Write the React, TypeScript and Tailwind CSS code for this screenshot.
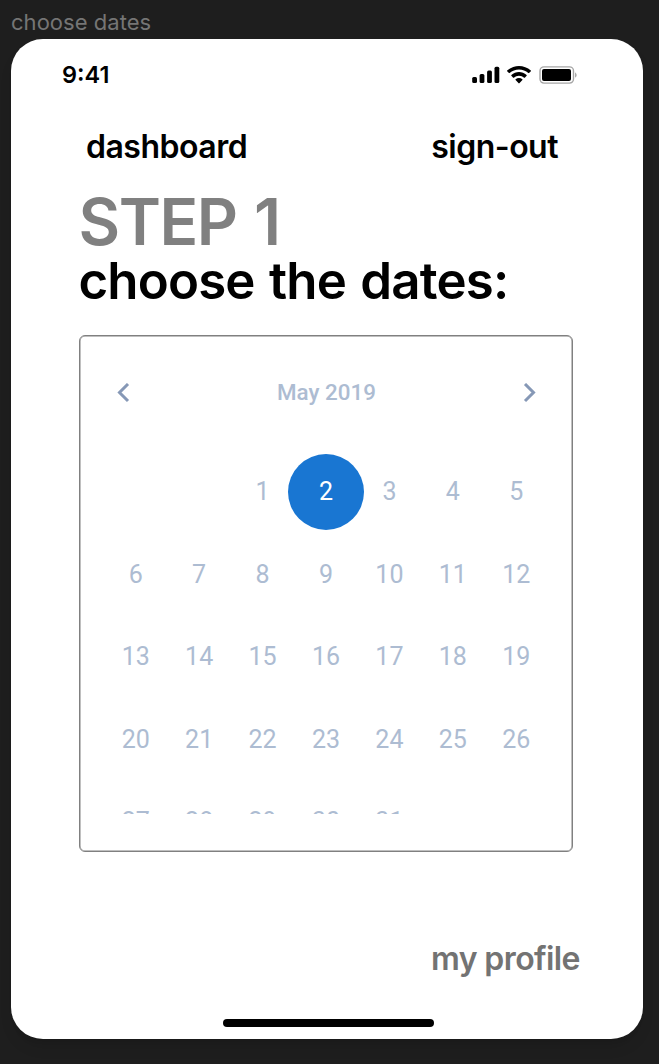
const days = Array.from({ length: 31 }, (_, i) => i + 1);

function Chevron({ d }: { d: string }) {
  return (
    <svg className="block h-[20px] w-[14px]" viewBox="0 0 14 20" fill="none" stroke="#8698b6" strokeWidth="3">
      <path d={d} />
    </svg>
  );
}

function StatusIcons() {
  return (
    <svg className="h-[20px] w-[106px]" viewBox="0 0 106 20">
      <rect x="0.200" y="12" width="4.800" height="6" rx="1.500" />
      <rect x="7.600" y="9" width="4.800" height="9" rx="1.500" />
      <rect x="15.100" y="5.500" width="4.800" height="12.500" rx="1.500" />
      <rect x="22.500" y="1.700" width="4.800" height="16.300" rx="1.500" />
      <path
        transform="translate(35 1) scale(1.4)"
        d="M8.57 2.466C11.058 2.466 13.45 3.388 15.253 5.042C15.389 5.17 15.606 5.168 15.74 5.038L17.037 3.729C17.105 3.663 17.143 3.574 17.142 3.48C17.142 3.387 17.103 3.298 17.034 3.233C12.303 -1.078 4.839 -1.078 .108 3.233C.039 3.298 0 3.387 0 3.48C0 3.574 .037 3.663 .105 3.729L1.402 5.038C1.536 5.169 1.753 5.17 1.89 5.042C3.692 3.388 6.084 2.466 8.571 2.466ZM8.568 6.889C9.925 6.889 11.234 7.401 12.24 8.327C12.376 8.458 12.591 8.456 12.723 8.321L14.01 6.991C14.078 6.921 14.116 6.827 14.115 6.728C14.114 6.63 14.074 6.536 14.005 6.468C10.942 3.577 6.197 3.577 3.134 6.468C3.065 6.536 3.025 6.63 3.024 6.728C3.023 6.827 3.061 6.921 3.13 6.991L4.416 8.321C4.549 8.456 4.764 8.458 4.9 8.327C5.905 7.402 7.212 6.889 8.568 6.889ZM11.092 9.802C11.094 9.908 11.056 10.009 10.986 10.083L8.81 12.36C8.746 12.426 8.66 12.464 8.568 12.464C8.477 12.464 8.391 12.426 8.327 12.36L6.151 10.083C6.081 10.009 6.043 9.908 6.045 9.802C6.047 9.697 6.09 9.598 6.162 9.527C7.551 8.25 9.586 8.25 10.975 9.527C11.048 9.598 11.09 9.697 11.092 9.802Z"
      />
      <rect x="68" y="1.900" width="33.500" height="16.200" rx="4" fill="none" stroke="#a6a6a6" strokeWidth="1.400" />
      <rect x="70" y="4.100" width="29" height="11.800" rx="2" />
      <path d="M103.200 7.200 Q106 10 103.200 12.800Z" fill="#999" />
    </svg>
  );
}

export default function App() {
  return (
    <div className="flex h-[1064px] w-[659px] flex-col overflow-hidden bg-[#1e1e1e] pl-[11px] font-['Inter',sans-serif] text-black">
      <div className="h-[39px] pt-[6px] text-[22px] leading-[33px] tracking-[0.03px] text-[#757575]">choose dates</div>
      <main className="flex h-[1000px] w-[632px] flex-col rounded-[32px] bg-white shadow-lg">
        <div className="flex h-[72px] items-center justify-between pr-[65px] pl-[51px]">
          <span className="text-[23.500px] font-semibold">9:41</span>
          <StatusIcons />
        </div>
        <nav className="flex h-[72px] items-center justify-between pr-[85px] pl-[75px] text-[32px] font-semibold tracking-[-0.5px]">
          <span>dashboard</span><span>sign-out</span>
        </nav>
        <h1 className="flex h-[152px] flex-col pt-[8px] pl-[67.500px] font-semibold whitespace-nowrap">
          <span className="h-[60px] text-[64px] leading-[62px] tracking-[-1.5px] text-[#808080] [word-spacing:3px]">STEP 1</span>
          <span className="text-[51px] leading-[60px] tracking-[-0.85px] [word-spacing:2.4px]">choose the dates:</span>
        </h1>
        <section className="ml-[68px] h-[517px] w-[494px] rounded-[6px] border border-[#808080] px-[24px] pt-[27px] font-['Roboto',sans-serif] text-[#adbcd2] shadow-[inset_0_0_0_0.5px_#808080]">
          <header className="flex h-[59px] items-center justify-between pr-[11px] pl-[12px] text-[22.400px] font-medium">
            <Chevron d="M12 1l-8.500 8.500L12 18" />
            <span>May 2019</span>
            <Chevron d="M2 1l8.500 8.500L2 18" />
          </header>
          <div className="mt-[29px] grid h-[363px] auto-rows-[82.400px] grid-cols-7 overflow-hidden text-[25px]">
            {days.map((day) => (
              <div key={day} className={day === 1 ? "col-start-3 flex items-center justify-center" : "flex items-center justify-center"}>
                {day === 2 ? <span className="flex size-[76px] shrink-0 items-center justify-center rounded-full bg-[#1976d2] text-white">2</span> : day}
              </div>
            ))}
          </div>
        </section>
        <div className="mt-[82px] pl-[420px] text-[32px] leading-[50px] font-semibold tracking-[-0.6px] text-[#737373]">my profile</div>
        <div className="mt-auto mb-[12px] ml-[212px] h-[8px] w-[211px] rounded-full bg-black" />
      </main>
    </div>
  );
}
